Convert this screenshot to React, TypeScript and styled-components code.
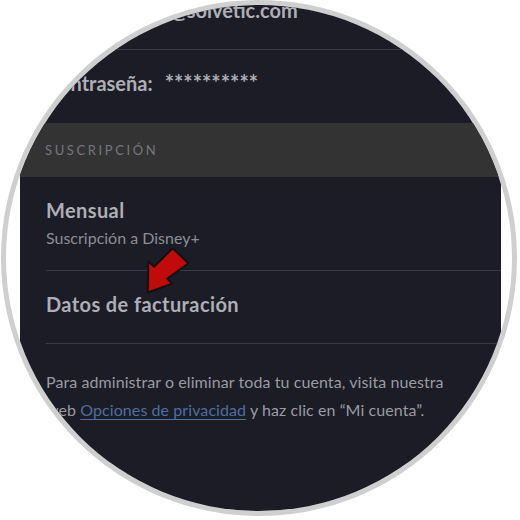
import styled, { createGlobalStyle } from "styled-components";

const GlobalStyle = createGlobalStyle`
    html, body {
        margin: 0;
        padding: 0;
        background: #ffffff;
    }
    body {
        font-family: Lato, "Noto Sans", sans-serif;
    }
`;

const Page = styled.div`
    width: 520px;
    height: 520px;
    overflow: hidden;
    background: #ffffff;
`;

const Lens = styled.div`
    width: 516px;
    height: 516px;
    margin-left: 1px;
    box-sizing: border-box;
    border: 5px solid #cfcfcf;
    border-radius: 50%;
    overflow: hidden;
    background: #ffffff;
`;

const Panel = styled.div`
    position: relative;
    width: 481px;
    height: 560px;
    margin: -28px 0 0 14px;
    background: #1b1c26;
`;

const Field = styled.div<{ $last?: boolean }>`
    height: 73px;
    margin-left: 26px;
    padding-top: 21px;
    box-sizing: border-box;
    border-bottom: ${(p) => (p.$last ? "none" : "1px solid #393a43")};
    font-size: 20px;
    line-height: 24px;
    font-weight: 700;
    color: #aeafb4;
    white-space: nowrap;
`;

const Stars = styled.span`
    margin-left: 12px;
    font-size: 22px;
    letter-spacing: 0;
`;

const SectionBand = styled.div`
    height: 54px;
    display: flex;
    align-items: center;
    padding-left: 25px;
    background: #333333;
    font-size: 13px;
    letter-spacing: 2.6px;
    color: #76777e;
    text-transform: uppercase;
`;

const Item = styled.div<{ $height: number }>`
    position: relative;
    height: ${(p) => p.$height}px;
    margin-left: 26px;
    padding-top: 21px;
    box-sizing: border-box;
    border-bottom: 1px solid #393a43;
`;

const ItemTitle = styled.div`
    font-size: 20px;
    line-height: 24px;
    font-weight: 700;
    letter-spacing: 0.4px;
    color: #aeafb4;
`;

const ItemSub = styled.div`
    margin-top: 5px;
    font-size: 16px;
    line-height: 22px;
    color: #8c8d94;
`;

const Note = styled.p`
    margin: 0;
    padding: 24px 40px 0 26px;
    font-size: 16px;
    line-height: 27.5px;
    letter-spacing: 0.08px;
    color: #9a9ba1;
`;

const Link = styled.a`
    color: #4e6e9e;
    text-decoration: underline;
    text-underline-offset: 3px;
`;

const Pointer = styled.svg`
    position: absolute;
    left: 99px;
    top: -25px;
    width: 46px;
    height: 50px;
    overflow: visible;
`;

const App = () => {
    return (
        <Page>
            <GlobalStyle />
            <Lens>
                <Panel>
                    <Field>Email: usuario@solvetic.com</Field>
                    <Field $last>
                        Contraseña:<Stars>**********</Stars>
                    </Field>
                    <SectionBand>Suscripción</SectionBand>
                    <Item $height={94}>
                        <ItemTitle>Mensual</ItemTitle>
                        <ItemSub>Suscripción a Disney+</ItemSub>
                    </Item>
                    <Item $height={73}>
                        <ItemTitle>Datos de facturación</ItemTitle>
                        <Pointer viewBox="0 0 46 50">
                            <polygon
                                points="2.8,46.5 3.2,15.2 9.2,20.8 27.6,2.2 43.4,17.2 22.2,32.8 27.2,37.6"
                                fill="#c10a0a"
                                stroke="#111"
                                strokeWidth="2"
                                strokeLinejoin="round"
                            />
                        </Pointer>
                    </Item>
                    <Note>
                        Para administrar o eliminar toda tu cuenta, visita nuestra
                        web <Link href="#">Opciones de privacidad</Link> y haz clic en
                        “Mi cuenta”.
                    </Note>
                </Panel>
            </Lens>
        </Page>
    );
};

export default App;
